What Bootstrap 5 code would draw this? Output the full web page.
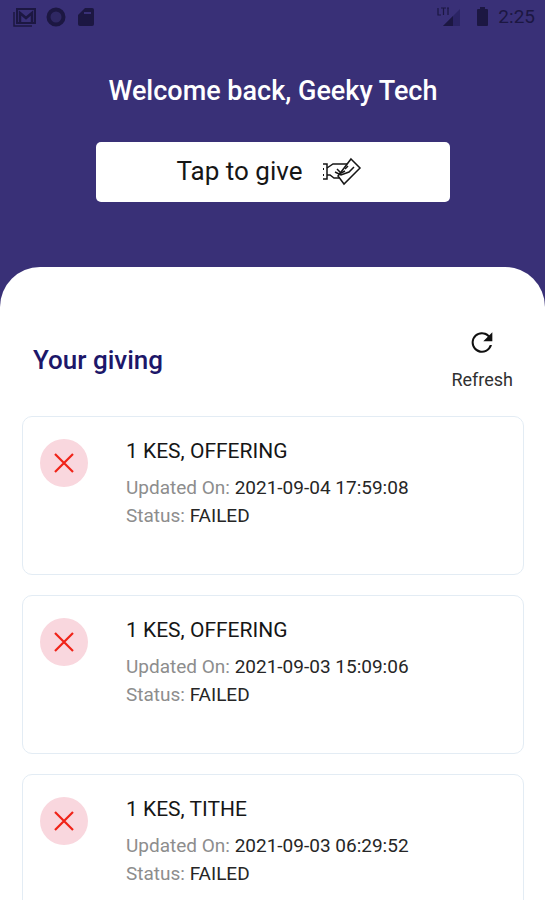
<!DOCTYPE html>
<html lang="en">
<head>
<meta charset="utf-8">
<meta name="viewport" content="width=device-width, initial-scale=1">
<title>Your giving</title>
<link href="https://cdn.jsdelivr.net/npm/bootstrap@5.3.0/dist/css/bootstrap.min.css" rel="stylesheet">
<style>
  body { font-family: Roboto, "Liberation Sans", sans-serif; background: #393077; color: #161616; }
  .status-bar { height: 34px; padding: 0 10px 0 12px; color: #1c1742; font-size: 19px; line-height: 34px; }
  .status-bar svg { display: block; }
  .hero { padding: 40px 95px 65px 96px; }
  .welcome { font-size: 27px; line-height: 34px; font-weight: 500; margin-bottom: 34px; }
  .give { height: 60px; border-radius: 5px; background: #fff; font-size: 26px; line-height: 32px; gap: 20px; padding: 0 7px 2px 0; color: #161616; }
  .give:hover { background: #f4f4fa; }
  .sheet { border-radius: 40px 40px 0 0; padding: 60px 21px 0 22px; }
  .sheet-head { padding: 0 9px 0 11px; margin-bottom: 24px; }
  .sheet-title { font-size: 26px; line-height: 32px; font-weight: 500; color: #1d1769; }
  .refresh { font-size: 18px; line-height: 24px; gap: 10px; color: #303030; padding: 0 2px; }
  .gift-list { gap: 20px; }
  .gift { height: 159px; flex-shrink: 0; border: 1px solid #e3ecf4; border-radius: 10px; padding: 19px 17px; gap: 38px; }
  .failed-mark { width: 48px; height: 48px; flex-shrink: 0; background: #f9d7de; margin-top: 3px; }
  .gift-name { font-size: 21px; line-height: 30px; margin-bottom: 10px; }
  .gift-line { font-size: 19px; line-height: 24px; margin-bottom: 4px; color: #262626; }
  .gift-label { color: #8d8d8d; }
</style>
<script src="https://cdn.jsdelivr.net/npm/bootstrap@5.3.0/dist/js/bootstrap.bundle.min.js" defer></script>
</head>
<body class="d-flex flex-column vh-100 overflow-hidden">
<div class="status-bar d-flex justify-content-between align-items-center flex-shrink-0">
  <div class="d-flex align-items-center gap-2">
    <svg width="26" height="22" viewBox="0 0 26 22" fill="none" stroke="currentColor" stroke-width="2" aria-hidden="true"><path d="M5 3h18v14H5z"/><path d="M2 6v14h18" stroke-width="1.5"/><path d="M8 16V7l6 5 6-5v9" stroke-width="2.500"/></svg>
    <svg width="22" height="22" viewBox="0 0 22 22" aria-hidden="true"><circle cx="10" cy="11" r="7.5" fill="#2f2863" stroke="currentColor" stroke-width="4"/></svg>
    <svg width="20" height="22" viewBox="0 0 20 22" aria-hidden="true"><path d="M9 2h7q2 0 2 2v14q0 2-2 2H4q-2 0-2-2V9z" fill="currentColor"/><path d="M8 7h7" stroke="#393077" stroke-width="2"/></svg>
  </div>
  <div class="d-flex align-items-center gap-2">
    <svg width="26" height="22" viewBox="0 0 26 22" aria-hidden="true"><path d="M24 3v17H7z" fill="#2b2464"/><path d="M17 10v10H7z" fill="currentColor"/><path d="M2 2v7h3M5 2h5M7.500 2v7M11 2h2M12 2v7" fill="none" stroke="currentColor" stroke-width="1.200"/></svg>
    <svg width="20" height="22" viewBox="0 0 20 22" aria-hidden="true"><path d="M10 1h5v2h2q1 0 1 1v15q0 1-1 1H8q-1 0-1-1V4q0-1 1-1h2z" fill="currentColor"/></svg>
    <span>2:25</span>
  </div>
</div>

<header class="hero flex-shrink-0 text-center text-white">
  <h1 class="welcome text-nowrap">Welcome back, Geeky Tech</h1>
  <button type="button" class="give btn border-0 w-100 d-flex justify-content-center align-items-center">
    <span>Tap to give</span>
    <svg width="40" height="30" viewBox="0 0 40 30" fill="none" stroke="currentColor" stroke-width="1.500" aria-hidden="true">
      <path d="M1 8h4v15H1" /><path d="M1 13h1M1 19h1" stroke-width="2"/>
      <path d="M5 12l6-4h14M5 19h3l4 3h5"/>
      <path d="M29 3l9 9-16 16-6-8z"/>
      <path d="M15 13l4 4 4-2M13 16l6 3 8-3 5-5M23 13l3-3"/>
    </svg>
  </button>
</header>

<main class="sheet bg-white flex-grow-1 overflow-hidden">
  <div class="sheet-head d-flex justify-content-between align-items-center">
    <h2 class="sheet-title mb-0">Your giving</h2>
    <button type="button" class="refresh btn border-0 d-flex flex-column align-items-center">
      <svg width="32" height="31" viewBox="0 0 24 24" fill="#111" aria-hidden="true"><path d="M17.650 6.350A8 8 0 1 0 19.730 14h-1.700A6.400 6.400 0 1 1 12 5.600c1.760 0 3.340.730 4.500 1.900L13 11h7V4z"/></svg>
      <span>Refresh</span>
    </button>
  </div>

  <div class="gift-list d-flex flex-column">
    <article class="gift d-flex align-items-start">
      <span class="failed-mark rounded-circle d-flex justify-content-center align-items-center"><svg width="20" height="20" viewBox="0 0 20 20" stroke="#f02318" stroke-width="2.200" aria-hidden="true"><path d="M1 1l18 18M19 1L1 19"/></svg></span>
      <div>
        <h3 class="gift-name fw-normal">1 KES, OFFERING</h3>
        <p class="gift-line"><span class="gift-label">Updated On:</span> 2021-09-04 17:59:08</p>
        <p class="gift-line"><span class="gift-label">Status:</span> FAILED</p>
      </div>
    </article>
    <article class="gift d-flex align-items-start">
      <span class="failed-mark rounded-circle d-flex justify-content-center align-items-center"><svg width="20" height="20" viewBox="0 0 20 20" stroke="#f02318" stroke-width="2.200" aria-hidden="true"><path d="M1 1l18 18M19 1L1 19"/></svg></span>
      <div>
        <h3 class="gift-name fw-normal">1 KES, OFFERING</h3>
        <p class="gift-line"><span class="gift-label">Updated On:</span> 2021-09-03 15:09:06</p>
        <p class="gift-line"><span class="gift-label">Status:</span> FAILED</p>
      </div>
    </article>
    <article class="gift d-flex align-items-start">
      <span class="failed-mark rounded-circle d-flex justify-content-center align-items-center"><svg width="20" height="20" viewBox="0 0 20 20" stroke="#f02318" stroke-width="2.200" aria-hidden="true"><path d="M1 1l18 18M19 1L1 19"/></svg></span>
      <div>
        <h3 class="gift-name fw-normal">1 KES, TITHE</h3>
        <p class="gift-line"><span class="gift-label">Updated On:</span> 2021-09-03 06:29:52</p>
        <p class="gift-line"><span class="gift-label">Status:</span> FAILED</p>
      </div>
    </article>
  </div>
</main>
</body>
</html>
